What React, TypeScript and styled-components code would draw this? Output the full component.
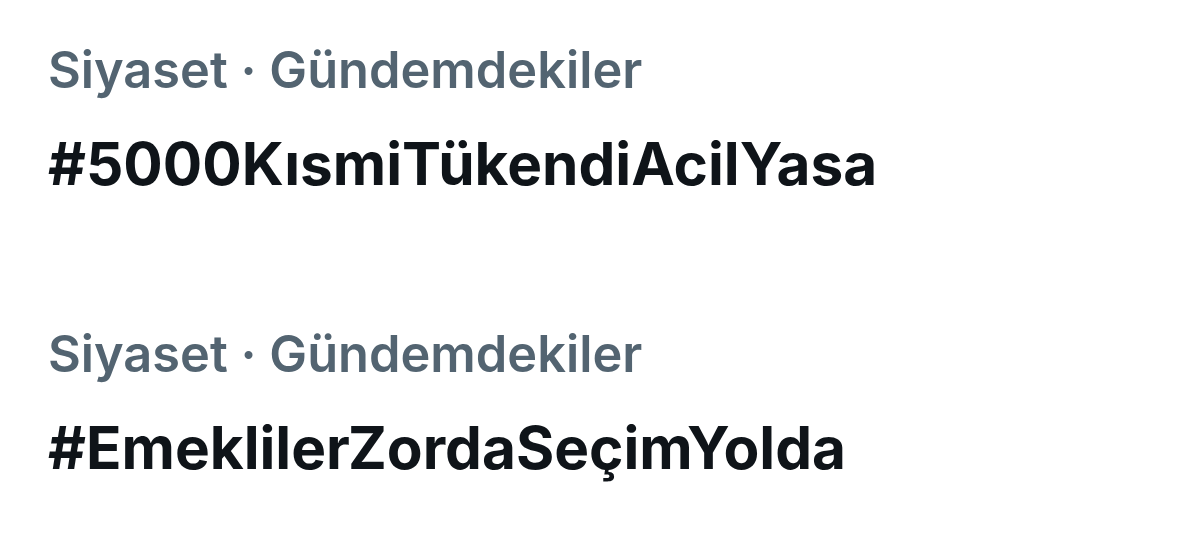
import React from "react";
import styled, { createGlobalStyle } from "styled-components";

const Global = createGlobalStyle`
  html, body { margin: 0; padding: 0; background: #ffffff; }
  body { font-family: Inter, "Noto Sans", Roboto, sans-serif; }
`;

const List = styled.div`
  display: flex;
  flex-direction: column;
  gap: 126px;
  padding: 40px 0 0 48px;
`;

const Trend = styled.div`
  display: flex;
  flex-direction: column;
  gap: 29px;
`;

const Category = styled.div`
  font-size: 50.5px;
  line-height: 60px;
  font-weight: 600;
  color: #536471;
  white-space: nowrap;
`;

const Tag = styled.div`
  font-size: 58.5px;
  line-height: 69px;
  font-weight: 700;
  color: #0f1419;
  white-space: nowrap;
`;

const trends = [
  { category: "Siyaset · Gündemdekiler", tag: "#5000KısmiTükendiAcilYasa" },
  { category: "Siyaset · Gündemdekiler", tag: "#EmeklilerZordaSeçimYolda" },
];

export default function App() {
  return (
    <>
      <Global />
      <List>
        {trends.map((t) => (
          <Trend key={t.tag}>
            <Category>{t.category}</Category>
            <Tag>{t.tag}</Tag>
          </Trend>
        ))}
      </List>
    </>
  );
}
